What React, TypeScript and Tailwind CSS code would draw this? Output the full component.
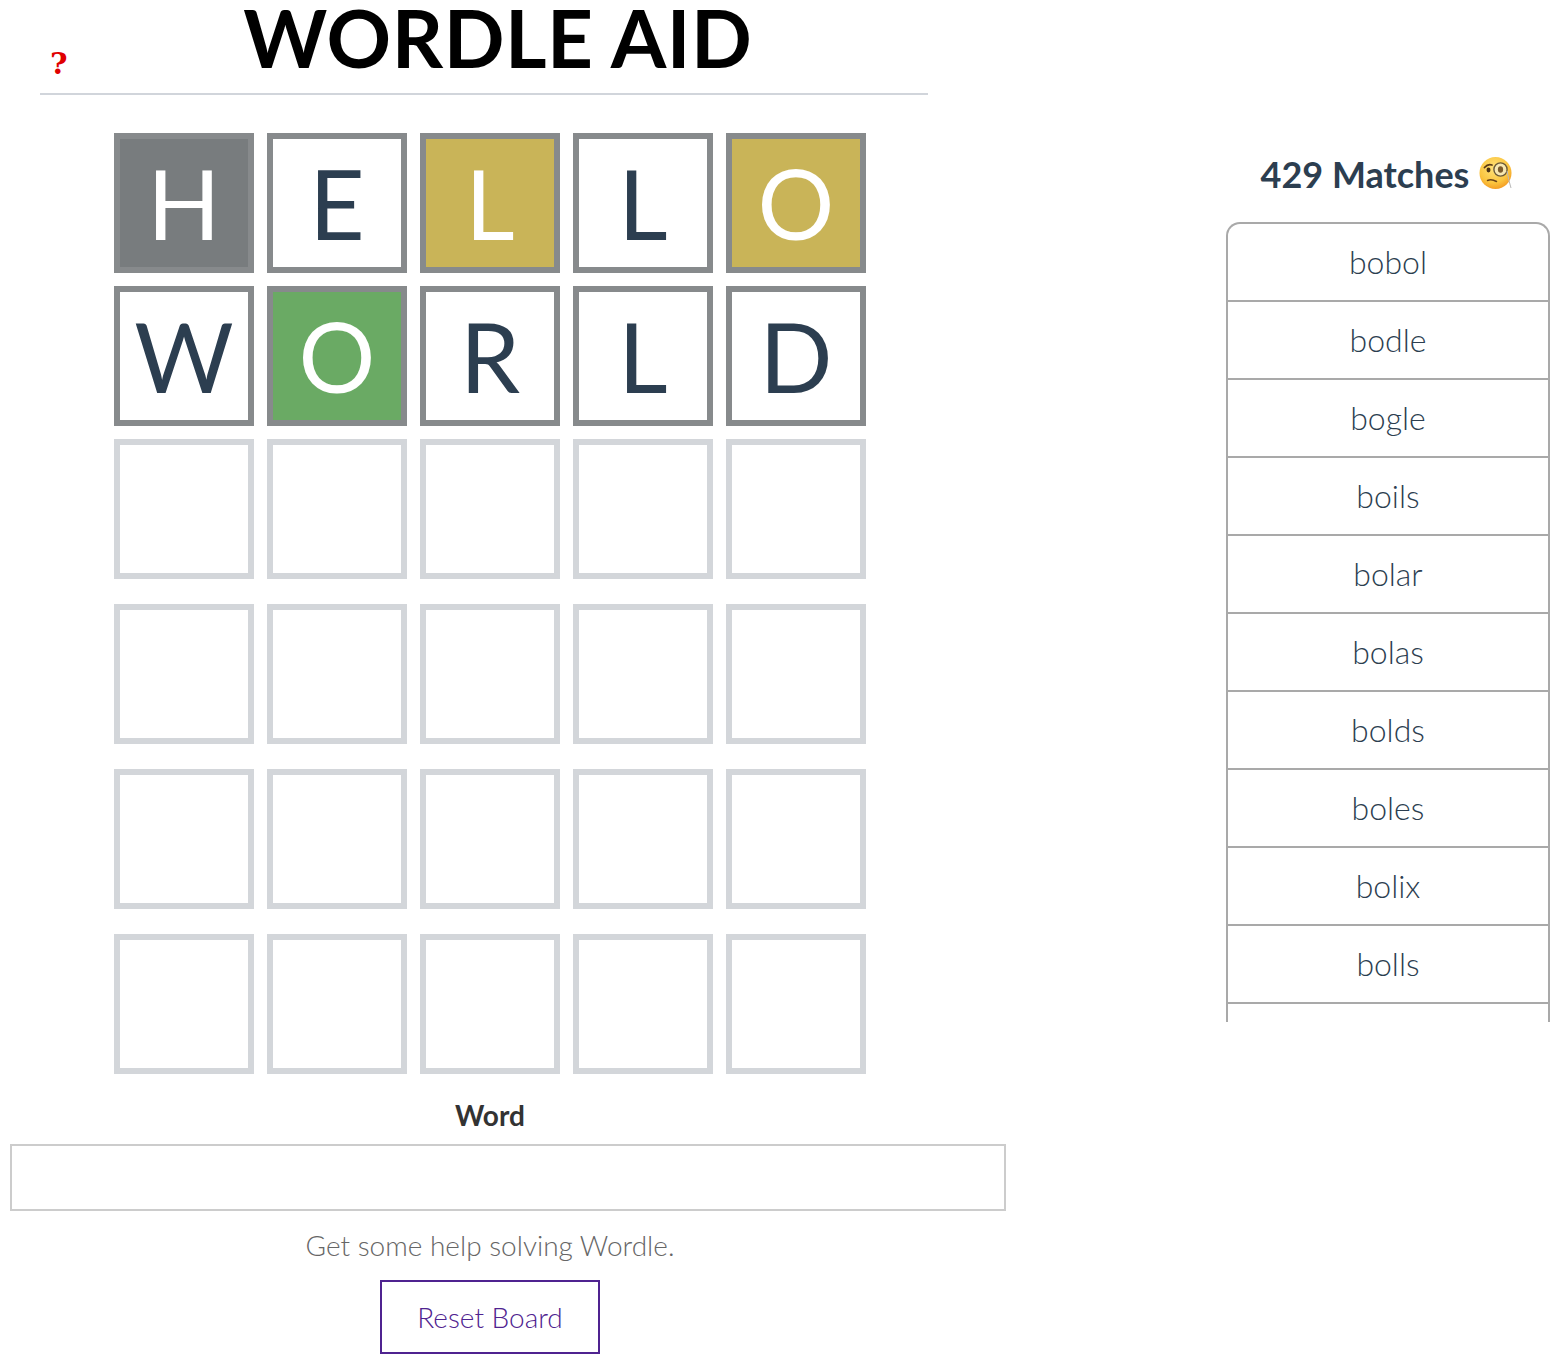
const rows = [
  [
    { l: 'H', s: 'absent' },
    { l: 'E', s: 'none' },
    { l: 'L', s: 'present' },
    { l: 'L', s: 'none' },
    { l: 'O', s: 'present' },
  ],
  [
    { l: 'W', s: 'none' },
    { l: 'O', s: 'correct' },
    { l: 'R', s: 'none' },
    { l: 'L', s: 'none' },
    { l: 'D', s: 'none' },
  ],
]

const words = ['bobol', 'bodle', 'bogle', 'boils', 'bolar', 'bolas', 'bolds', 'boles', 'bolix', 'bolls', 'bolts']

const fills: Record<string, string> = {
  none: 'bg-white text-[#2c3e50]',
  absent: 'bg-[#787c7e] text-white',
  present: 'bg-[#c9b458] text-white',
  correct: 'bg-[#6aaa64] text-white',
}

function Tile({ letter, state }: { letter: string; state: string }) {
  return (
    <div
      className={`flex h-[140px] w-[140px] items-center justify-center border-[6px] border-[#878a8c] text-[96px] leading-none ${fills[state]}`}
    >
      {letter}
    </div>
  )
}

function EmptyRow() {
  return (
    <div className="mb-[25px] flex gap-[13px]">
      {[0, 1, 2, 3, 4].map((i) => (
        <div key={i} className="h-[140px] w-[140px] border-[6px] border-[#d3d6da] bg-white" />
      ))}
    </div>
  )
}

// face with monocle, the emoji font isn't available
function MonocleFace() {
  return (
    <svg width="36" height="36" viewBox="0 0 36 36" className="shrink-0">
      <defs>
        <radialGradient id="face" cx="45%" cy="35%" r="70%">
          <stop offset="0%" stopColor="#ffe27a" />
          <stop offset="65%" stopColor="#fbc53f" />
          <stop offset="100%" stopColor="#f2951f" />
        </radialGradient>
      </defs>
      <circle cx="16.5" cy="17" r="16" fill="url(#face)" />
      <path d="M5.5 11.5 Q9 7.5 13 9" fill="none" stroke="#5b3a16" strokeWidth="1.8" strokeLinecap="round" />
      <ellipse cx="9.5" cy="14" rx="2" ry="2.4" fill="#4a3114" />
      <circle cx="21.5" cy="13.5" r="6.6" fill="#f7e7b0" stroke="#6b5a3a" strokeWidth="1.4" />
      <ellipse cx="21.5" cy="13.5" rx="2.6" ry="3.2" fill="#7a5a2c" />
      <path d="M8.5 24.5 Q12.5 22.8 17.5 25.5" fill="none" stroke="#6b4418" strokeWidth="1.5" strokeLinecap="round" />
      <path d="M28 15 Q29.5 24 32 32" fill="none" stroke="#b8b8b8" strokeWidth="1" />
    </svg>
  )
}

export default function App() {
  return (
    <div className="flex h-[1366px] w-[1554px] overflow-hidden bg-white font-['Lato',sans-serif]">
      <div className="w-[980px] shrink-0">
        <header className="ml-[40px] flex h-[95px] w-[888px] border-b-2 border-[#d1d5db] pl-[10px]">
          <span className="mt-[45px] h-[38px] font-['DejaVu_Serif',serif] text-[30px] leading-[38px] font-bold text-[#e00000]">
            ?
          </span>
          <h1 className="flex-1 text-center text-[80px] leading-[74px] font-bold tracking-[0.5px] text-black">
            WORDLE AID
          </h1>
        </header>

        <main className="mt-[38px] ml-[114px]">
          {rows.map((row, r) => (
            <div key={r} className="mb-[13px] flex gap-[13px]">
              {row.map((t, i) => (
                <Tile key={i} letter={t.l} state={t.s} />
              ))}
            </div>
          ))}
          {[0, 1, 2, 3].map((i) => (
            <EmptyRow key={i} />
          ))}
        </main>

        <div className="-mt-[1px] text-center">
          <label className="block h-[46px] text-[28px] leading-[34px] font-bold text-[#333]">Word</label>
        </div>
        <input className="mt-[0px] ml-[10px] block h-[67px] w-[996px] max-w-none border-2 border-[#ccc] bg-white" />
        <p className="mt-[16px] text-center text-[28px] leading-[36px] font-light text-[#666]">
          Get some help solving Wordle.
        </p>
        <div className="mt-[17px] flex justify-center">
          <button className="h-[74px] w-[220px] border-2 border-[#4f2390] bg-white text-[28px] font-light text-[#4f2390]">
            Reset Board
          </button>
        </div>
      </div>

      <aside className="mt-[152px] ml-[246px] w-[324px] shrink-0">
        <h2 className="flex h-[44px] items-center justify-center gap-[10px] text-[36px] leading-[44px] font-bold text-[#2c3e50]">
          429 Matches
          <MonocleFace />
        </h2>
        <ul className="mt-[26px] h-[800px] overflow-hidden rounded-t-[14px] border-x-2 border-t-2 border-[#a9a9a9]">
          {words.map((w) => (
            <li
              key={w}
              className="flex h-[78px] items-center justify-center border-b-2 border-[#a9a9a9] text-[32px] font-light text-[#2c3e50]"
            >
              {w}
            </li>
          ))}
        </ul>
      </aside>
    </div>
  )
}
